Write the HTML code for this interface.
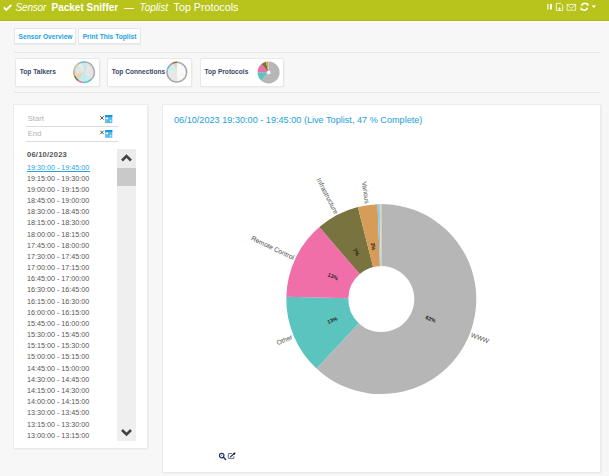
<!DOCTYPE html>
<html><head><meta charset="utf-8"><style>
html,body{margin:0;padding:0;}
body{width:609px;height:476px;overflow:hidden;background:#f7f7f7;position:relative;font-family:"Liberation Sans",sans-serif;}
.a{position:absolute;white-space:nowrap;}
#hdr{position:absolute;left:0;top:0;width:609px;height:20px;background:#b8c41c;border-bottom:1px solid #b0bb18;box-shadow:0 1px 0 #fbfbfb;}
#hdr .t{position:absolute;top:2px;color:#fff;font-size:10px;line-height:12px;}
.btn{position:absolute;top:28px;height:16px;background:#fff;border:1px solid #e6e6e6;box-shadow:0 1px 0 rgba(0,0,0,0.05);box-sizing:border-box;color:#1ea0dc;font-weight:bold;font-size:6.65px;line-height:15.6px;}
.hr{position:absolute;left:14px;width:586px;height:1px;background:#e6e6e6;}
.tile{position:absolute;top:58.5px;width:82.5px;height:27.7px;background:#fff;border-radius:1px;box-shadow:0 0 0 1px #e8e8e8, 0.5px 1px 1.5px rgba(0,0,0,0.14);}
.tt{position:absolute;left:3.8px;top:8.6px;font-size:6.6px;line-height:9px;font-weight:bold;color:#3b4566;}
.panel{position:absolute;background:#fff;box-shadow:0 0 0 1px #ebebeb, 0.5px 1px 2px rgba(0,0,0,0.10);}
.row{position:absolute;left:27px;font-size:7.2px;line-height:9px;color:#555;white-space:nowrap;}
.row.sel{color:#27a3dc;}
.inp{position:absolute;left:26px;width:92px;height:1px;background:#dcdcdc;}
.ph{position:absolute;left:27.8px;font-size:7.6px;line-height:9px;color:#b0b0b0;}
.lbl{font-family:"Liberation Sans",sans-serif;font-size:6.7px;fill:#505050;}
.pct{font-family:"Liberation Sans",sans-serif;font-size:5.3px;fill:#1a1a1a;font-weight:bold;}
</style></head><body>
<div id="hdr">
  <svg class="a" style="left:3px;top:4px" width="9" height="7" viewBox="0 0 9 7"><path d="M0.8,3.4 L3.3,5.9 L8.3,0.8" fill="none" stroke="#fff" stroke-width="1.8"/></svg>
  <span class="t" style="left:15.6px;font-style:italic;letter-spacing:-0.2px">Sensor</span>
  <span class="t" style="left:51.5px;font-weight:bold;">Packet Sniffer</span>
  <span class="t" style="left:124px;">—</span>
  <span class="t" style="left:139.5px;font-style:italic;">Toplist</span>
  <span class="t" style="left:173.6px;top:1.4px;font-size:10.7px">Top Protocols</span>
  <svg class="a" style="left:545px;top:0px" width="55" height="14" viewBox="0 0 55 14">
    <rect x="2.2" y="3.9" width="1.4" height="5.6" fill="#f4f8d8"/><rect x="5" y="3.9" width="1.9" height="5.6" fill="#fff"/>
    <path d="M11.3,3.4 h4.4 l2,2 v5.1 h-6.4 z" fill="none" stroke="#f2f5d2" stroke-width="0.95"/>
    <path d="M14.5,7.4 v2.8 M13.1,8.8 h2.8" stroke="#fff" stroke-width="1"/>
    <rect x="22.1" y="4.4" width="8.5" height="5.8" fill="none" stroke="#eef2c8" stroke-width="0.95"/>
    <path d="M22.1,4.8 l4.25,3.6 l4.25,-3.6" fill="none" stroke="#eef2c8" stroke-width="0.95"/>
    <path d="M36.6,5.9 a2.9,2.9 0 0 1 5.2,-1.4 M42.4,7.6 a2.9,2.9 0 0 1 -5.2,1.4" fill="none" stroke="#fff" stroke-width="1.5"/>
    <path d="M41.2,3.4 l1.9,0.2 l0.1,2.4 z M37.8,10.1 l-1.9,-0.2 l-0.1,-2.4 z" fill="#fff" stroke="#fff" stroke-width="0.6"/>
    <path d="M46.5,5.5 h4.6 l-2.3,2.4 z" fill="#fff"/>
  </svg>
</div>
<div class="btn" style="left:14px;width:62px;padding-left:3.6px">Sensor Overview</div>
<div class="btn" style="left:78.4px;width:62.4px;padding-left:3.3px">Print This Toplist</div>
<div class="hr" style="top:52px"></div>
<div class="tile" style="left:16px"><span class="tt">Top Talkers</span></div>
<div class="tile" style="left:108px"><span class="tt">Top Connections</span></div>
<div class="tile" style="left:200.7px;width:82px"><span class="tt">Top Protocols</span></div>
<svg class="a" style="left:0;top:0" width="609" height="100">
<circle cx="84.1" cy="72.2" r="10.9" fill="#e9e9e9"/>
<path d="M84.10,72.20 L81.13,63.07 A9.6,9.6 0 0 1 84.94,62.64 Z" fill="#c8ecec"/>
<path d="M84.10,72.20 L84.94,62.64 A9.6,9.6 0 0 1 90.89,78.99 Z" fill="#e3e3e3"/>
<path d="M84.10,72.20 L90.89,78.99 A9.6,9.6 0 0 1 78.59,80.06 Z" fill="#c6eded"/>
<path d="M84.10,72.20 L78.59,80.06 A9.6,9.6 0 0 1 75.08,75.48 Z" fill="#d9d7c6"/>
<path d="M84.10,72.20 L75.08,75.48 A9.6,9.6 0 0 1 74.59,70.86 Z" fill="#f0dcc2"/>
<path d="M84.10,72.20 L74.59,70.86 A9.6,9.6 0 0 1 75.79,67.40 Z" fill="#d3e6f5"/>
<path d="M84.10,72.20 L75.79,67.40 A9.6,9.6 0 0 1 77.93,64.85 Z" fill="#e9e4c8"/>
<path d="M84.10,72.20 L77.93,64.85 A9.6,9.6 0 0 1 81.13,63.07 Z" fill="#ededed"/>
<path d="M85.3,62.7 L84.39999999999999,81.5" stroke="#bfe6e6" stroke-width="1.3"/>
<path d="M85.1,72.2 L90.6,67.2 M85.1,73.2 L92.1,76.2" stroke="#f6f6f6" stroke-width="0.6"/>
<path d="M80.73,61.83 A10.9,10.9 0 0 1 85.05,61.34 L84.92,62.84 A9.4,9.4 0 0 0 81.20,63.26 Z" fill="#5cc4be"/>
<path d="M85.05,61.34 A10.9,10.9 0 0 1 91.81,79.91 L90.75,78.85 A9.4,9.4 0 0 0 84.92,62.84 Z" fill="#ababab"/>
<path d="M91.81,79.91 A10.9,10.9 0 0 1 82.21,82.93 L82.47,81.46 A9.4,9.4 0 0 0 90.75,78.85 Z" fill="#5cc4be"/>
<path d="M82.21,82.93 A10.9,10.9 0 0 1 77.85,81.13 L78.71,79.90 A9.4,9.4 0 0 0 82.47,81.46 Z" fill="#f06fa9"/>
<path d="M77.85,81.13 A10.9,10.9 0 0 1 73.86,75.93 L75.27,75.41 A9.4,9.4 0 0 0 78.71,79.90 Z" fill="#79743f"/>
<path d="M73.86,75.93 A10.9,10.9 0 0 1 73.31,70.68 L74.79,70.89 A9.4,9.4 0 0 0 75.27,75.41 Z" fill="#d69d59"/>
<path d="M73.31,70.68 A10.9,10.9 0 0 1 74.66,66.75 L75.96,67.50 A9.4,9.4 0 0 0 74.79,70.89 Z" fill="#8fc6f0"/>
<path d="M74.66,66.75 A10.9,10.9 0 0 1 77.09,63.85 L78.06,65.00 A9.4,9.4 0 0 0 75.96,67.50 Z" fill="#cfc58a"/>
<path d="M77.09,63.85 A10.9,10.9 0 0 1 80.73,61.83 L81.20,63.26 A9.4,9.4 0 0 0 78.06,65.00 Z" fill="#b4b4b4"/>
<circle cx="176.8" cy="72.2" r="10.6" fill="#f8f8f8"/>
<path d="M176.80,72.20 L177.61,81.46 A9.299999999999999,9.299999999999999 0 0 1 167.96,69.33 Z" fill="#e8e8e8"/>
<path d="M176.80,72.20 L167.96,69.33 A9.299999999999999,9.299999999999999 0 0 1 170.58,65.29 Z" fill="#c2eeee"/>
<path d="M176.80,72.20 L170.58,65.29 A9.299999999999999,9.299999999999999 0 0 1 173.02,63.70 Z" fill="#d6ecec"/>
<path d="M176.80,72.20 L173.02,63.70 A9.299999999999999,9.299999999999999 0 0 1 177.12,62.91 Z" fill="#dedbc4"/>
<path d="M176.80,61.60 A10.6,10.6 0 1 1 166.72,68.92 L168.15,69.39 A9.1,9.1 0 1 0 176.80,63.10 Z" fill="#a9a9a9"/>
<path d="M166.72,68.92 A10.6,10.6 0 0 1 169.71,64.32 L170.71,65.44 A9.1,9.1 0 0 0 168.15,69.39 Z" fill="#5cc4be"/>
<path d="M169.71,64.32 A10.6,10.6 0 0 1 172.49,62.52 L173.10,63.89 A9.1,9.1 0 0 0 170.71,65.44 Z" fill="#f06fa9"/>
<path d="M172.49,62.52 A10.6,10.6 0 0 1 177.17,61.61 L177.12,63.11 A9.1,9.1 0 0 0 173.10,63.89 Z" fill="#79743f"/>
<path d="M268.60,61.40 A11,11 0 1 1 261.10,80.44 L267.24,73.86 A2,2 0 1 0 268.60,70.40 Z" fill="#b6b6b6"/>
<path d="M261.10,80.44 A11,11 0 0 1 257.60,72.13 L266.60,72.35 A2,2 0 0 0 267.24,73.86 Z" fill="#5cc4be"/>
<path d="M257.60,72.13 A11,11 0 0 1 261.43,64.06 L267.30,70.88 A2,2 0 0 0 266.60,72.35 Z" fill="#f06fa9"/>
<path d="M261.43,64.06 A11,11 0 0 1 265.88,61.74 L268.11,70.46 A2,2 0 0 0 267.30,70.88 Z" fill="#79743f"/>
<path d="M265.88,61.74 A11,11 0 0 1 268.16,61.41 L268.52,70.40 A2,2 0 0 0 268.11,70.46 Z" fill="#d69d59"/>
<path d="M268.16,61.41 A11,11 0 0 1 268.43,61.40 L268.57,70.40 A2,2 0 0 0 268.52,70.40 Z" fill="#8fc6f0"/>
<path d="M268.43,61.40 A11,11 0 0 1 268.60,61.40 L268.60,70.40 A2,2 0 0 0 268.57,70.40 Z" fill="#e2d9a8"/>
</svg>
<div class="hr" style="top:92px"></div>

<div class="panel" style="left:14px;top:105px;width:133px;height:343px;">
</div>
<span class="ph a" style="top:114px">Start</span>
<div class="inp" style="top:126px"></div>
<span class="ph a" style="top:128.7px">End</span>
<div class="inp" style="top:141px"></div>
<svg class="a" style="left:98px;top:113px" width="16" height="26" viewBox="0 0 16 26">
  <path d="M2.3,3.2 l3.4,3.4 M5.7,3.2 l-3.4,3.4" stroke="#444" stroke-width="0.95"/>
  <rect x="7.2" y="2" width="7.1" height="8.1" fill="#5dbbec"/><rect x="7.2" y="2" width="7.1" height="2.1" fill="#1398de"/>
  <rect x="8" y="4.6" width="2" height="1.5" fill="#fff"/><rect x="12" y="7" width="1.2" height="1.6" fill="#e8f6fd"/>
  <path d="M2.3,17.7 l3.4,3.4 M5.7,17.7 l-3.4,3.4" stroke="#444" stroke-width="0.95"/>
  <rect x="7.2" y="17" width="7.1" height="7.8" fill="#5dbbec"/><rect x="7.2" y="17" width="7.1" height="2.1" fill="#1398de"/>
  <rect x="8" y="19.6" width="2" height="1.5" fill="#fff"/><rect x="12" y="22" width="1.2" height="1.6" fill="#e8f6fd"/>
</svg>
<span class="a" style="left:27px;top:150px;font-size:7.6px;line-height:9px;font-weight:bold;color:#555;letter-spacing:0.2px">06/10/2023</span>
<div class="row sel" style="top:162.50px">19:30:00 - 19:45:00</div><div class="row" style="top:173.68px">19:15:00 - 19:30:00</div><div class="row" style="top:184.85px">19:00:00 - 19:15:00</div><div class="row" style="top:196.03px">18:45:00 - 19:00:00</div><div class="row" style="top:207.20px">18:30:00 - 18:45:00</div><div class="row" style="top:218.38px">18:15:00 - 18:30:00</div><div class="row" style="top:229.55px">18:00:00 - 18:15:00</div><div class="row" style="top:240.73px">17:45:00 - 18:00:00</div><div class="row" style="top:251.90px">17:30:00 - 17:45:00</div><div class="row" style="top:263.07px">17:00:00 - 17:15:00</div><div class="row" style="top:274.25px">16:45:00 - 17:00:00</div><div class="row" style="top:285.43px">16:30:00 - 16:45:00</div><div class="row" style="top:296.60px">16:15:00 - 16:30:00</div><div class="row" style="top:307.78px">16:00:00 - 16:15:00</div><div class="row" style="top:318.95px">15:45:00 - 16:00:00</div><div class="row" style="top:330.12px">15:30:00 - 15:45:00</div><div class="row" style="top:341.30px">15:15:00 - 15:30:00</div><div class="row" style="top:352.48px">15:00:00 - 15:15:00</div><div class="row" style="top:363.65px">14:45:00 - 15:00:00</div><div class="row" style="top:374.82px">14:30:00 - 14:45:00</div><div class="row" style="top:386.00px">14:15:00 - 14:30:00</div><div class="row" style="top:397.18px">14:00:00 - 14:15:00</div><div class="row" style="top:408.35px">13:30:00 - 13:45:00</div><div class="row" style="top:419.53px">13:15:00 - 13:30:00</div><div class="row" style="top:430.70px">13:00:00 - 13:15:00</div>
<div class="a" style="left:27px;top:170.6px;width:62.5px;height:0.8px;background:#27a3dc"></div>
<div class="a" style="left:117px;top:148.5px;width:19px;height:292px;background:#efefef"></div>
<div class="a" style="left:117px;top:148.5px;width:19px;height:19px;background:#ececec"></div>
<div class="a" style="left:117px;top:167.5px;width:19px;height:18.5px;background:#c9c9c9"></div>
<svg class="a" style="left:117px;top:148.5px" width="19" height="292" viewBox="0 0 19 292">
  <path d="M5,11.5 L9.5,7 L14,11.5" fill="none" stroke="#444" stroke-width="2.6" stroke-linejoin="miter"/>
  <path d="M5,281 L9.5,285.5 L14,281" fill="none" stroke="#444" stroke-width="2.6" stroke-linejoin="miter"/>
</svg>

<div class="panel" style="left:163px;top:105px;width:437px;height:366.5px;"></div>
<span class="a" style="left:174px;top:115.4px;font-size:9.15px;line-height:11px;color:#1e9ed9">06/10/2023 19:30:00 - 19:45:00 (Live Toplist, 47 % Complete)</span>
<svg class="a" style="left:0;top:0" width="609" height="476">
<path d="M381.30,204.10 A95,95 0 1 1 316.51,368.58 L358.79,323.23 A33,33 0 1 0 381.30,266.10 Z" fill="#b6b6b6"/>
<path d="M316.51,368.58 A95,95 0 0 1 286.33,296.78 L348.31,298.29 A33,33 0 0 0 358.79,323.23 Z" fill="#5cc4be"/>
<path d="M286.33,296.78 A95,95 0 0 1 319.35,227.08 L359.78,274.08 A33,33 0 0 0 348.31,298.29 Z" fill="#f06fa9"/>
<path d="M319.35,227.08 A95,95 0 0 1 357.84,207.04 L373.15,267.12 A33,33 0 0 0 359.78,274.08 Z" fill="#79743f"/>
<path d="M357.84,207.04 A95,95 0 0 1 377.49,204.18 L379.98,266.13 A33,33 0 0 0 373.15,267.12 Z" fill="#d69d59"/>
<path d="M377.49,204.18 A95,95 0 0 1 379.81,204.11 L380.78,266.10 A33,33 0 0 0 379.98,266.13 Z" fill="#8fc6f0"/>
<path d="M379.81,204.11 A95,95 0 0 1 381.30,204.10 L381.30,266.10 A33,33 0 0 0 380.78,266.10 Z" fill="#e2d9a8"/>
<text transform="translate(471.18,334.50) rotate(21.50)" text-anchor="start" dy="2.4" class="lbl">WWW</text>
<text transform="translate(430.89,318.63) rotate(21.50)" text-anchor="middle" dy="2.3" class="pct">62%</text>
<text transform="translate(292.25,336.53) rotate(-22.80)" text-anchor="end" dy="2.4" class="lbl">Other</text>
<text transform="translate(332.16,319.75) rotate(-22.80)" text-anchor="middle" dy="2.3" class="pct">13%</text>
<text transform="translate(294.00,257.74) rotate(25.35)" text-anchor="end" dy="2.4" class="lbl">Remote Control</text>
<text transform="translate(333.13,276.28) rotate(25.35)" text-anchor="middle" dy="2.3" class="pct">13%</text>
<text transform="translate(336.70,213.41) rotate(62.50)" text-anchor="end" dy="2.4" class="lbl">Infrastructure</text>
<text transform="translate(356.69,251.82) rotate(62.50)" text-anchor="middle" dy="2.3" class="pct">7%</text>
<text transform="translate(367.36,203.51) rotate(81.70)" text-anchor="end" dy="2.4" class="lbl">Various</text>
<text transform="translate(373.61,246.36) rotate(81.70)" text-anchor="middle" dy="2.3" class="pct">3%</text>
</svg>
<svg class="a" style="left:216px;top:449px" width="24" height="14" viewBox="0 0 24 14">
  <circle cx="5.7" cy="6.6" r="2.25" fill="none" stroke="#26345e" stroke-width="1.15"/>
  <circle cx="5.7" cy="6.6" r="0.6" fill="#5a6a90"/>
  <path d="M7.4,8.3 L9.6,10.5" stroke="#26345e" stroke-width="1.4" stroke-linecap="round"/>
  <path d="M16.2,4.6 H12.3 V9.4 H17.8 V7.2" fill="none" stroke="#4c5577" stroke-width="0.85"/>
  <path d="M14.4,7.8 L17.8,5" stroke="#1f2a4d" stroke-width="1.1" stroke-linecap="round"/>
  <circle cx="18.4" cy="4.6" r="1.05" fill="#0e1530"/>
</svg>
</body></html>
